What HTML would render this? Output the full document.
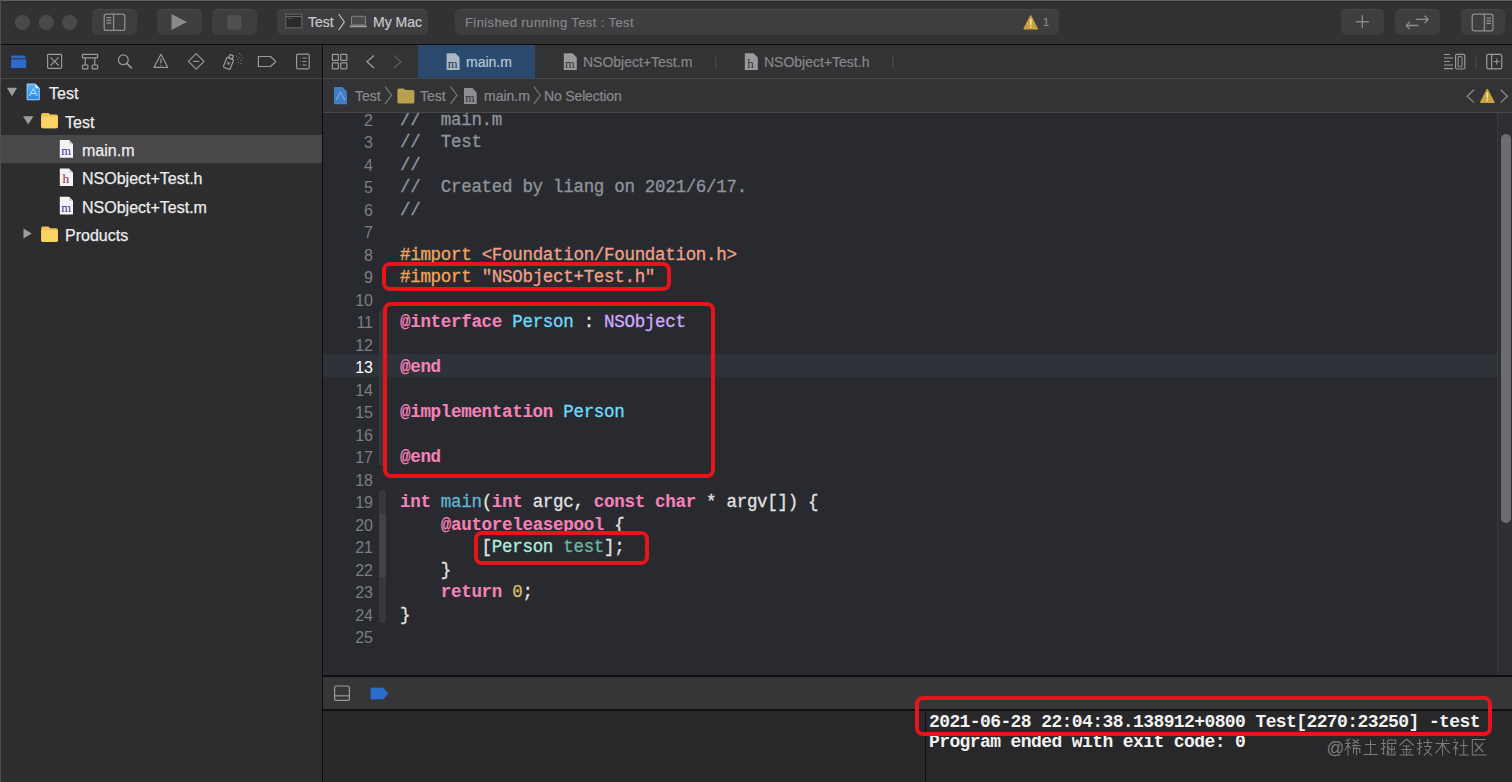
<!DOCTYPE html>
<html><head><meta charset="utf-8">
<style>
*{margin:0;padding:0;box-sizing:border-box}
html,body{width:1512px;height:782px;overflow:hidden;background:#2a2a2c}
body{position:relative;font-family:"Liberation Sans",sans-serif;color:#dfdfe0}
.a{position:absolute}
.tx{white-space:pre;-webkit-text-stroke-width:0.2px}
svg{position:absolute;overflow:visible}
/* toolbar */
#tb{left:0;top:0;width:1512px;height:44px;background:linear-gradient(#2d2d2f 0,#2f2f31 2px,#323234 4px);border-top:1px solid #606062}
#tbl{left:0;top:44px;width:1512px;height:1px;background:#0e0e0f}
.light{width:15px;height:15px;border-radius:50%;background:#4b4b4d;top:15px}
.btn{background:#3e3e40;border-radius:6px;top:9px;height:26px;box-shadow:inset 0 1px 0 #48484a}
/* navigator */
#nav{left:0;top:45px;width:322px;height:737px;background:#2d2d2f}
#navbar{left:0;top:45px;width:322px;height:33px;background:#2f2f31}
#navl{left:0;top:78px;width:322px;height:1px;background:#454547}
#vdiv{left:322px;top:45px;width:1px;height:737px;background:#0d0d0e}
.row{left:0;width:322px;height:28px;font-size:16px;color:#ececed;line-height:32px;-webkit-text-stroke:0.25px #ececed}
.row span{position:absolute;top:0}
/* editor */
#tabs{left:323px;top:45px;width:1189px;height:33px;background:#333335}
#tabl{left:323px;top:78px;width:1189px;height:1px;background:#48484a}
#jump{left:323px;top:79px;width:1189px;height:33px;background:#333335}
#jumpl{left:323px;top:112px;width:1189px;height:1px;background:#48484a}
#code{left:323px;top:113px;width:1189px;height:562px;background:#292a2f;overflow:hidden}
.ln{position:absolute;left:0;width:50px;text-align:right;font-family:"Liberation Sans",sans-serif;font-size:16px;color:#7d7e83;height:22.5px;line-height:27px}
.cl{position:absolute;left:77px;font-family:"Liberation Mono",monospace;font-size:17.5px;letter-spacing:-0.3px;white-space:pre;height:22.5px;line-height:26.5px;color:#e2e2e3;-webkit-text-stroke-width:0.3px}
.cm{color:#8f949b}
.pp{color:#f2a45c}
.st{color:#f0a08a}
.kw{color:#f382b8;font-weight:bold;-webkit-text-stroke-width:0.1px}
.ty{color:#6cdcfb}
.ns{color:#d0a8ff}
.fn{color:#62b4cf}
.pc{color:#a8f0df}
.pm{color:#67b7a4}
.nu{color:#d0bf69}
.cur{color:#ffffff}
.rib{position:absolute;left:56px;width:7px;border-radius:3.5px;background:#37383d}
.rbox{position:absolute;border:4.3px solid #e8141c;border-radius:8px}
/* debug */
#dbl{left:323px;top:675px;width:1189px;height:2px;background:#0f0f10}
#dbg{left:323px;top:677px;width:1189px;height:32px;background:#363638}
#dbl2{left:323px;top:709px;width:1189px;height:2px;background:#0f0f10}
#vars{left:323px;top:711px;width:602px;height:71px;background:#28282a}
#cdiv{left:925px;top:711px;width:1px;height:71px;background:#0f0f10}
#cons{left:926px;top:711px;width:586px;height:71px;background:#28282a}
.con{position:absolute;left:3px;font-family:"Liberation Mono",monospace;font-weight:bold;font-size:18px;letter-spacing:-0.6px;white-space:pre;color:#f2f2f2;line-height:20px}
</style></head><body>
<div id="tb" class="a"></div>
<div id="tbl" class="a"></div>
<div class="a light" style="left:15px"></div>
<div class="a light" style="left:39px"></div>
<div class="a light" style="left:62px"></div>
<div class="a btn" style="left:92px;width:45px"></div>
<div class="a btn" style="left:157px;width:45px"></div>
<div class="a btn" style="left:212px;width:45px"></div>
<div class="a btn" style="left:277px;width:151px"></div>
<div class="a btn" style="left:455px;width:604px"></div>
<div class="a btn" style="left:1341px;width:43px"></div>
<div class="a btn" style="left:1395px;width:45px"></div>
<div class="a btn" style="left:1461px;width:44px"></div>

<div id="nav" class="a"></div>
<div id="navbar" class="a"></div>
<div id="navl" class="a"></div>
<div class="a" style="left:0;top:134.7px;width:322px;height:28.3px;background:#48484a"></div>
<div class="a row" style="top:78.1px"><span style="left:49px">Test</span></div>
<div class="a row" style="top:106.5px"><span style="left:65px">Test</span></div>
<div class="a row" style="top:134.9px"><span style="left:82px">main.m</span></div>
<div class="a row" style="top:163.3px"><span style="left:82px">NSObject+Test.h</span></div>
<div class="a row" style="top:191.7px"><span style="left:82px">NSObject+Test.m</span></div>
<div class="a row" style="top:220.1px"><span style="left:65px">Products</span></div>
<div id="vdiv" class="a"></div>

<div id="tabs" class="a"></div>
<div class="a" style="left:418px;top:45px;width:117px;height:33px;background:#2a4a6d"></div>
<div id="tabl" class="a"></div>
<div id="jump" class="a"></div>
<div id="jumpl" class="a"></div>


<!-- toolbar texts -->
<div class="a tx" style="left:308px;top:12px;font-size:14px;color:#c9c9cb;line-height:20px">Test</div>
<div class="a tx" style="left:373px;top:12px;font-size:14px;color:#c9c9cb;line-height:20px">My Mac</div>
<div class="a tx" style="left:465px;top:14.3px;font-size:13px;letter-spacing:0.4px;color:#868688;line-height:18px">Finished running Test : Test</div>
<div class="a tx" style="left:1043px;top:15px;font-size:11px;color:#8a8a8c;line-height:14px">1</div>
<!-- tabs texts -->
<div class="a tx" style="left:466px;top:52px;font-size:14px;color:#b9c7d8;line-height:20px">main.m</div>
<div class="a tx" style="left:583px;top:52px;font-size:14px;color:#87878a;line-height:20px">NSObject+Test.m</div>
<div class="a tx" style="left:764px;top:52px;font-size:14px;color:#87878a;line-height:20px">NSObject+Test.h</div>
<!-- jump texts -->
<div class="a tx" style="left:355px;top:86px;font-size:14px;color:#8b8b8d;line-height:20px">Test</div>
<div class="a tx" style="left:420px;top:86px;font-size:14px;color:#8b8b8d;line-height:20px">Test</div>
<div class="a tx" style="left:484px;top:86px;font-size:14px;color:#8b8b8d;line-height:20px">main.m</div>
<div class="a tx" style="left:544px;top:86px;font-size:14px;letter-spacing:-0.15px;color:#8b8b8d;line-height:20px">No Selection</div>
<div id="code" class="a">
<div class="a" style="left:0;top:241.20px;width:1174px;height:22.5px;background:#2f3239"></div>
<div class="rib" style="top:197.20px;height:155.50px"></div>
<div class="rib" style="top:377.20px;height:133.00px"></div>
<div class="rib" style="top:400.70px;height:63.50px;background:#424348;border-radius:0"></div>
<div class="ln" style="top:-28.80px">1</div>
<div class="ln" style="top:-6.30px">2</div>
<div class="cl" style="top:-6.30px"><span class="cm">//  main.m</span></div>
<div class="ln" style="top:16.20px">3</div>
<div class="cl" style="top:16.20px"><span class="cm">//  Test</span></div>
<div class="ln" style="top:38.70px">4</div>
<div class="cl" style="top:38.70px"><span class="cm">//</span></div>
<div class="ln" style="top:61.20px">5</div>
<div class="cl" style="top:61.20px"><span class="cm">//  Created by liang on 2021/6/17.</span></div>
<div class="ln" style="top:83.70px">6</div>
<div class="cl" style="top:83.70px"><span class="cm">//</span></div>
<div class="ln" style="top:106.20px">7</div>
<div class="ln" style="top:128.70px">8</div>
<div class="cl" style="top:128.70px"><span class="pp">#import </span><span class="st">&lt;Foundation/Foundation.h&gt;</span></div>
<div class="ln" style="top:151.20px">9</div>
<div class="cl" style="top:151.20px"><span class="pp">#import </span><span class="st">"NSObject+Test.h"</span></div>
<div class="ln" style="top:173.70px">10</div>
<div class="ln" style="top:196.20px">11</div>
<div class="cl" style="top:196.20px"><span class="kw">@interface</span> <span class="ty">Person</span> : <span class="ns">NSObject</span></div>
<div class="ln" style="top:218.70px">12</div>
<div class="ln cur" style="top:241.20px">13</div>
<div class="cl" style="top:241.20px"><span class="kw">@end</span></div>
<div class="ln" style="top:263.70px">14</div>
<div class="ln" style="top:286.20px">15</div>
<div class="cl" style="top:286.20px"><span class="kw">@implementation</span> <span class="ty">Person</span></div>
<div class="ln" style="top:308.70px">16</div>
<div class="ln" style="top:331.20px">17</div>
<div class="cl" style="top:331.20px"><span class="kw">@end</span></div>
<div class="ln" style="top:353.70px">18</div>
<div class="ln" style="top:376.20px">19</div>
<div class="cl" style="top:376.20px"><span class="kw">int</span> <span class="fn">main</span>(<span class="kw">int</span> argc, <span class="kw">const</span> <span class="kw">char</span> * argv[]) {</div>
<div class="ln" style="top:398.70px">20</div>
<div class="cl" style="top:398.70px">    <span class="kw">@autoreleasepool</span> {</div>
<div class="ln" style="top:421.20px">21</div>
<div class="cl" style="top:421.20px">        [<span class="pc">Person</span> <span class="pm">test</span>];</div>
<div class="ln" style="top:443.70px">22</div>
<div class="cl" style="top:443.70px">    }</div>
<div class="ln" style="top:466.20px">23</div>
<div class="cl" style="top:466.20px">    <span class="kw">return</span> <span class="nu">0</span>;</div>
<div class="ln" style="top:488.70px">24</div>
<div class="cl" style="top:488.70px">}</div>
<div class="ln" style="top:511.20px">25</div>
</div>

<div class="a" style="left:1497px;top:113px;width:15px;height:562px;background:#2e2f33;border-left:1px solid #3a3b3f"></div>
<div class="a" style="left:1501px;top:134px;width:10px;height:389px;border-radius:5px;background:#6c6d71"></div>
<div id="dbl" class="a"></div>
<div id="dbg" class="a"></div>
<div id="dbl2" class="a"></div>
<div id="vars" class="a"></div>
<div id="cdiv" class="a"></div>
<div id="cons" class="a">
<div class="con" style="top:1px">2021-06-28 22:04:38.138912+0800 Test[2270:23250] -test</div>
<div class="con" style="top:21px">Program ended with exit code: 0</div>
</div>

<div class="a" style="left:0;top:0;width:1px;height:782px;background:#4d4d4f"></div>
<!-- ICONS -->
<svg width="1512" height="782" style="left:0;top:0" viewBox="0 0 1512 782">
<!-- traffic lights -->
<circle cx="22.3" cy="22.3" r="7.3" fill="#4a4a4c"/>
<circle cx="46" cy="22.3" r="7.3" fill="#4a4a4c"/>
<circle cx="69.8" cy="22.3" r="7.3" fill="#4a4a4c"/>
<!-- sidebar toggle -->
<g fill="none" stroke="#8e8e90" stroke-width="1.3">
<rect x="104.2" y="14.2" width="20.6" height="16.2" rx="2.2"/>
<line x1="113.6" y1="14.2" x2="113.6" y2="30.4"/>
<line x1="106.3" y1="17.6" x2="111.3" y2="17.6"/>
<line x1="106.3" y1="20.3" x2="111.3" y2="20.3"/>
<line x1="106.3" y1="23" x2="111.3" y2="23"/>
</g>
<!-- play -->
<path d="M171.5 14 L187 22 L171.5 30 Z" fill="#8a8a8c"/>
<!-- stop -->
<rect x="227.3" y="15.2" width="14" height="14.2" rx="2" fill="#505052"/>
<!-- scheme app icon -->
<rect x="285.8" y="14.2" width="16" height="13.6" fill="#2b2b2d" stroke="#6a6a6c" stroke-width="1"/>
<line x1="286" y1="16.5" x2="301.5" y2="16.5" stroke="#6a6a6c" stroke-width="1"/>
<line x1="288" y1="18.6" x2="292" y2="18.6" stroke="#555" stroke-width="1"/>
<path d="M338.7 14 L344.3 22 L338.7 30" fill="none" stroke="#c0c0c2" stroke-width="1.2"/>
<!-- mac icon -->
<rect x="351.5" y="16.3" width="14" height="8.6" rx="0.8" fill="#4a4a4c" stroke="#8a8a8c" stroke-width="0.9"/>
<rect x="349.7" y="25.6" width="17.4" height="1.6" rx="0.8" fill="#a0a0a2"/>
<!-- warning in activity -->
<path d="M1030.7 16 L1037.2 28.8 L1024.2 28.8 Z" fill="#caa23a" stroke="#caa23a" stroke-width="1.6" stroke-linejoin="round"/>
<rect x="1030" y="19" width="1.5" height="6" fill="#f3e6c0"/>
<rect x="1030" y="26.2" width="1.5" height="1.5" fill="#f3e6c0"/>
<!-- plus -->
<g stroke="#8e8e90" stroke-width="1.3" fill="none">
<line x1="1355.8" y1="21.8" x2="1368.8" y2="21.8"/>
<line x1="1362.3" y1="15.3" x2="1362.3" y2="28.3"/>
<!-- swap arrows -->
<path d="M1416 19.4 H1428 M1424.5 15.8 L1428.2 19.4 L1424.5 23"/>
<path d="M1418.4 25.5 H1406.6 M1409.9 21.9 L1406.3 25.5 L1409.9 29.1"/>
<!-- inspector toggle -->
<rect x="1472.2" y="14.2" width="20.8" height="16.6" rx="2.2"/>
<line x1="1484.4" y1="14.2" x2="1484.4" y2="30.8"/>
<line x1="1486.3" y1="18.2" x2="1491" y2="18.2"/>
<line x1="1486.3" y1="20.8" x2="1491" y2="20.8"/>
<line x1="1486.3" y1="23.4" x2="1491" y2="23.4"/>
</g>

<!-- navigator icons -->
<path d="M11.1 55.6 H24.6 L26.3 58.2 H11.1 Z" fill="#2d68c6"/>
<rect x="11.1" y="59.3" width="15.2" height="8.8" fill="#2d6acb"/>
<g fill="none" stroke="#9a9a9c" stroke-width="1.2">
<rect x="47.6" y="54.4" width="14" height="14" rx="0.8"/>
<path d="M50.5 57.3 L53.5 60.3 M58.7 57.3 L55.7 60.3 M50.5 65.5 L53.5 62.5 M58.7 65.5 L55.7 62.5"/>
<rect x="82.4" y="54.4" width="15.2" height="3.4" rx="0.6"/>
<path d="M85.2 57.8 V65.2 M94.8 57.8 V65.2"/>
<rect x="82.5" y="65" width="5.4" height="3.8" rx="0.6"/>
<rect x="92.2" y="65" width="5.4" height="3.8" rx="0.6"/>
<circle cx="123.3" cy="59.8" r="4.9"/>
<line x1="126.8" y1="63.4" x2="131.8" y2="68.4" stroke-width="1.5"/>
<path d="M160.9 54.3 L167.7 67.3 L154.1 67.3 Z" stroke-linejoin="round"/>
<path d="M160.9 58.8 V63.3 M160.9 64.8 V65.8"/>
<path d="M196.2 53.6 L204 61.4 L196.2 69.2 L188.4 61.4 Z" stroke-linejoin="round"/>
<line x1="193.2" y1="61.4" x2="199.2" y2="61.4"/>
<g transform="rotate(22 229 62)"><rect x="225.4" y="58.2" width="7.2" height="10.6" rx="1.3"/><rect x="227.2" y="54.6" width="3.6" height="3.6" rx="0.5"/><path d="M227.6 61.8 L230.4 64.8 M230.4 61.8 L227.6 64.8" stroke-width="0.9"/></g>
<circle cx="54.6" cy="61.4" r="1.3" fill="#9a9a9c" stroke="none"/>
<path d="M258.4 56.5 H270.5 L275.8 61.5 L270.5 66.5 H258.4 Z" stroke-linejoin="round"/>
<rect x="296.6" y="54.2" width="12.6" height="14.6" rx="1.2"/>
<path d="M300.5 58 H301 M302.5 58 H306.5 M300.5 61.5 H301 M302.5 61.5 H306.5 M300.5 65 H301 M302.5 65 H306.5" stroke-width="1"/>
</g>
<g fill="#8a8a8c">
<circle cx="236.5" cy="56" r="0.6"/><circle cx="239" cy="57.5" r="0.6"/><circle cx="241.5" cy="55" r="0.6"/><circle cx="237.5" cy="59.5" r="0.6"/><circle cx="240.5" cy="60.5" r="0.6"/><circle cx="242" cy="58" r="0.6"/><circle cx="238.5" cy="62.5" r="0.6"/><circle cx="241" cy="63.5" r="0.6"/><circle cx="239.5" cy="53.5" r="0.6"/>
</g>

<!-- tree -->
<path d="M6.9 87.8 L17.1 87.8 L12 96.2 Z" fill="#9d9d9f"/>
<path d="M23 116.3 L33.5 116.3 L28.2 124.6 Z" fill="#9d9d9f"/>
<path d="M23.5 228.5 L31.8 233.5 L23.5 238.5 Z" fill="#9d9d9f"/>
<!-- project icon -->
<defs><linearGradient id="pg" x1="0" y1="0" x2="0" y2="1"><stop offset="0" stop-color="#56b4f4"/><stop offset="1" stop-color="#2e84e2"/></linearGradient></defs>
<path d="M27.1 84 L35.3 84 L39.3 88.2 L39.3 99.8 L27.1 99.8 Z" fill="url(#pg)" stroke="#9ad6ff" stroke-width="1" stroke-linejoin="round"/>
<path d="M35.3 84 L35.3 88.2 L39.3 88.2 Z" fill="#d8eeff"/>
<path d="M29.3 96 L33.2 88.6 L37.1 96 M30 93.5 H36.4" fill="none" stroke="#b8e2ff" stroke-width="1"/>
<!-- folders -->
<g id="fold">
<path d="M41.2 114.8 Q41.2 113 43 113 L48.5 113 L50.3 114.6 L56.2 114.6 Q57.9 114.6 57.9 116.3 L57.9 126.6 Q57.9 128.3 56.2 128.3 L43 128.3 Q41.2 128.3 41.2 126.6 Z" fill="#f2c14e"/>
<path d="M41.2 116.4 L57.9 116.4 L57.9 126.6 Q57.9 128.3 56.2 128.3 L43 128.3 Q41.2 128.3 41.2 126.6 Z" fill="#fbd266"/>
</g>
<g transform="translate(0,113.6)">
<path d="M41.2 114.8 Q41.2 113 43 113 L48.5 113 L50.3 114.6 L56.2 114.6 Q57.9 114.6 57.9 116.3 L57.9 126.6 Q57.9 128.3 56.2 128.3 L43 128.3 Q41.2 128.3 41.2 126.6 Z" fill="#f2c14e"/>
<path d="M41.2 116.4 L57.9 116.4 L57.9 126.6 Q57.9 128.3 56.2 128.3 L43 128.3 Q41.2 128.3 41.2 126.6 Z" fill="#fbd266"/>
</g>
<!-- file icons -->
<g id="mfile">
<path d="M59.8 140 L69 140 L73 144.2 L73 157.7 L59.8 157.7 Z" fill="#f4f4f6"/>
<path d="M69 140 L69 144.2 L73 144.2 Z" fill="#cfcfd4"/>
<text x="61.2" y="155" font-family="Liberation Serif" font-size="12.5" fill="#33339a">m</text>
</g>
<g transform="translate(0,56.8)">
<path d="M59.8 140 L69 140 L73 144.2 L73 157.7 L59.8 157.7 Z" fill="#f4f4f6"/>
<path d="M69 140 L69 144.2 L73 144.2 Z" fill="#cfcfd4"/>
<text x="61.2" y="155" font-family="Liberation Serif" font-size="12.5" fill="#33339a">m</text>
</g>
<g transform="translate(0,28.4)">
<path d="M59.8 140 L69 140 L73 144.2 L73 157.7 L59.8 157.7 Z" fill="#f4f4f6"/>
<path d="M69 140 L69 144.2 L73 144.2 Z" fill="#cfcfd4"/>
<text x="62.4" y="155" font-family="Liberation Serif" font-size="13.5" fill="#a31f3f">h</text>
</g>

<!-- tab bar icons -->
<g fill="none" stroke="#9a9a9c" stroke-width="1.2">
<rect x="332.4" y="54.4" width="6" height="6" rx="0.5"/>
<rect x="340.8" y="54.4" width="6" height="6" rx="0.5"/>
<rect x="332.4" y="62.8" width="6" height="6" rx="0.5"/>
<rect x="340.8" y="62.8" width="6" height="6" rx="0.5"/>
<path d="M374 55.5 L367 61.8 L374 68" stroke-width="1.4"/>
<path d="M394 55.5 L401 61.8 L394 68" stroke="#5c5c5e" stroke-width="1.4"/>
<line x1="715.7" y1="55" x2="715.7" y2="68" stroke="#4a4a4c"/>
<line x1="892.9" y1="55" x2="892.9" y2="68" stroke="#4a4a4c"/>
<line x1="1475.8" y1="55" x2="1475.8" y2="68" stroke="#4a4a4c"/>
<path d="M1444 54.5 H1450 M1444 58 H1453 M1444 61.5 H1450 M1444 65 H1453 M1444 68.6 H1453" stroke-width="1.1"/>
<rect x="1455.6" y="54.4" width="9.2" height="14.6" rx="1.2"/>
<rect x="1458.2" y="56.6" width="3.8" height="10.2" rx="0.3" stroke-width="1"/>
<rect x="1486.8" y="54.4" width="15" height="14.4" rx="1.6"/>
<line x1="1491.6" y1="54.4" x2="1491.6" y2="68.8"/>
<path d="M1496.7 58.6 V64.6 M1493.7 61.6 H1499.7" stroke-width="1"/>
</g>
<g id="tabm">
<path d="M446.6 53.2 L455.4 53.2 L459.6 57.6 L459.6 70 L446.6 70 Z" fill="#a9b8c9"/>
<text x="447.8" y="67.8" font-family="Liberation Serif" font-size="12.5" fill="#26303c">m</text>
</g>
<g transform="translate(117.2,0)">
<path d="M446.6 53.2 L455.4 53.2 L459.6 57.6 L459.6 70 L446.6 70 Z" fill="#9a9a9c"/>
<text x="447.8" y="67.8" font-family="Liberation Serif" font-size="12.5" fill="#333">m</text>
</g>
<g transform="translate(298.2,0)">
<path d="M446.6 53.2 L455.4 53.2 L459.6 57.6 L459.6 70 L446.6 70 Z" fill="#9a9a9c"/>
<text x="449" y="67.8" font-family="Liberation Serif" font-size="13" fill="#333">h</text>
</g>

<!-- jump bar icons -->
<path d="M334 87 L342.4 87 L347 91.4 L347 104.3 L334 104.3 Z" fill="#3f7fc4"/>
<path d="M336.2 100 L340.5 92 L344.8 100" fill="none" stroke="#9cc4ec" stroke-width="0.8"/>
<path d="M385.1 86.6 L391.6 95.2 L385.1 103.8" fill="none" stroke="#7c7c7e" stroke-width="1.1"/>
<path d="M397.4 90 Q397.4 88.4 399 88.4 L403.8 88.4 L405.4 89.9 L412.8 89.9 Q414.4 89.9 414.4 91.5 L414.4 102 Q414.4 103.6 412.8 103.6 L399 103.6 Q397.4 103.6 397.4 102 Z" fill="#b8a04e"/>
<path d="M450.5 86.6 L457 95.2 L450.5 103.8" fill="none" stroke="#7c7c7e" stroke-width="1.1"/>
<path d="M464 88 L472.4 88 L476.7 92.4 L476.7 104 L464 104 Z" fill="#8e8e92"/>
<text x="465.2" y="102" font-family="Liberation Serif" font-size="12" fill="#2e2e30">m</text>
<path d="M533.9 86.6 L540.4 95.2 L533.9 103.8" fill="none" stroke="#7c7c7e" stroke-width="1.1"/>
<path d="M1474 89.8 L1467.2 96.2 L1474 102.6" fill="none" stroke="#8a8a8c" stroke-width="1.3"/>
<path d="M1500.6 89.8 L1507.4 96.2 L1500.6 102.6" fill="none" stroke="#8a8a8c" stroke-width="1.3"/>
<path d="M1487.3 89.6 L1493.8 102.3 L1480.8 102.3 Z" fill="#caa23a" stroke="#caa23a" stroke-width="1.6" stroke-linejoin="round"/>
<rect x="1486.6" y="92.4" width="1.5" height="6" fill="#f3e6c0"/>
<rect x="1486.6" y="99.4" width="1.5" height="1.5" fill="#f3e6c0"/>

<!-- debug bar icons -->
<g fill="none" stroke="#9a9a9c" stroke-width="1.2">
<rect x="334.6" y="686" width="14.8" height="14.4" rx="1.6"/>
<line x1="334.6" y1="695.8" x2="349.4" y2="695.8"/>
</g>
<path d="M371 688 L383 688 L388 693.5 L383 699 L371 699 Z" fill="#2a6fcd" stroke="#2a6fcd" stroke-width="0.8" stroke-linejoin="round"/>
<!-- watermark -->
<text x="1326.5" y="753.5" font-family="Liberation Sans" font-size="17.5" fill="#7c7c7f">@</text>
<g fill="none" stroke="#7c7c7f" stroke-width="1.15">
<path transform="translate(1344.5,738.5) scale(0.9,1)" d="M6 0.5 L1.5 2 M0.5 5 H7 M4 2 V17 M4 6 L0.5 12 M4.5 7 L7 10 M9 1 L16 5 M16 1 L9 5 M8 7 H18 M12 5.5 L9.5 10 M10 10 V15 M10 10 H17 V14.5 M13.5 8 V17"/>
<path transform="translate(1362.5,738.5) scale(0.9,1)" d="M3 6 H15 M1 16 H17 M9 1 V16"/>
<path transform="translate(1380.5,738.5) scale(0.9,1)" d="M0.5 5 H6 M3.5 0.5 V15.5 L2 14.5 M0.5 11 L6 8 M8 1.5 H17 V5 H8 M8 1.5 V10 Q8 15 6.5 17 M12.5 6 V16 M9.5 8 V11 H15.5 V8 M9 12.5 V16.5 H16 V12.5"/>
<path transform="translate(1398.5,738.5) scale(0.9,1)" d="M9 0.5 L1 7 M9 0.5 L17 7 M5 7.5 H13 M3 11 H15 M9 7.5 V16 M1 16.5 H17 M5 12.5 L6.5 15 M13 12.5 L11.5 15"/>
<path transform="translate(1416.5,738.5) scale(0.9,1)" d="M0.5 5 H6 M3.5 0.5 V15.5 L2 14.5 M0.5 11 L6 8 M7.5 4 H17.5 M12.5 0.5 V8 M8.5 8 H16 Q13 14 8 17 M10 10.5 Q13 15 17.5 17"/>
<path transform="translate(1434.5,738.5) scale(0.9,1)" d="M1 5 H17 M9 0.5 V17 M8.5 5.5 Q6 11 1 14.5 M9.5 5.5 Q12 11 17 14.5 M12.5 1 L14 3"/>
<path transform="translate(1452.5,738.5) scale(0.9,1)" d="M2.5 0.5 L3.5 2 M0.5 4 H5.5 L1 11 M3.5 8 V17 M4 9 L6 11 M8 7 H17 M7 16.5 H18 M12.5 1 V16.5"/>
<path transform="translate(1470.5,738.5) scale(0.9,1)" d="M17 1 H2 V16.5 H17.5 M5 4.5 L14 13.5 M14 4.5 L5 13.5"/>
</g>
</svg>
<!-- /ICONS -->
<div class="rbox" style="left:382px;top:262px;width:289px;height:29px"></div>
<div class="rbox" style="left:383px;top:301.5px;width:331.5px;height:176.5px"></div>
<div class="rbox" style="left:474px;top:530.6px;width:174.6px;height:34.2px"></div>
<div class="rbox" style="left:915.4px;top:696.4px;width:576.6px;height:39.4px"></div>
</body></html>
